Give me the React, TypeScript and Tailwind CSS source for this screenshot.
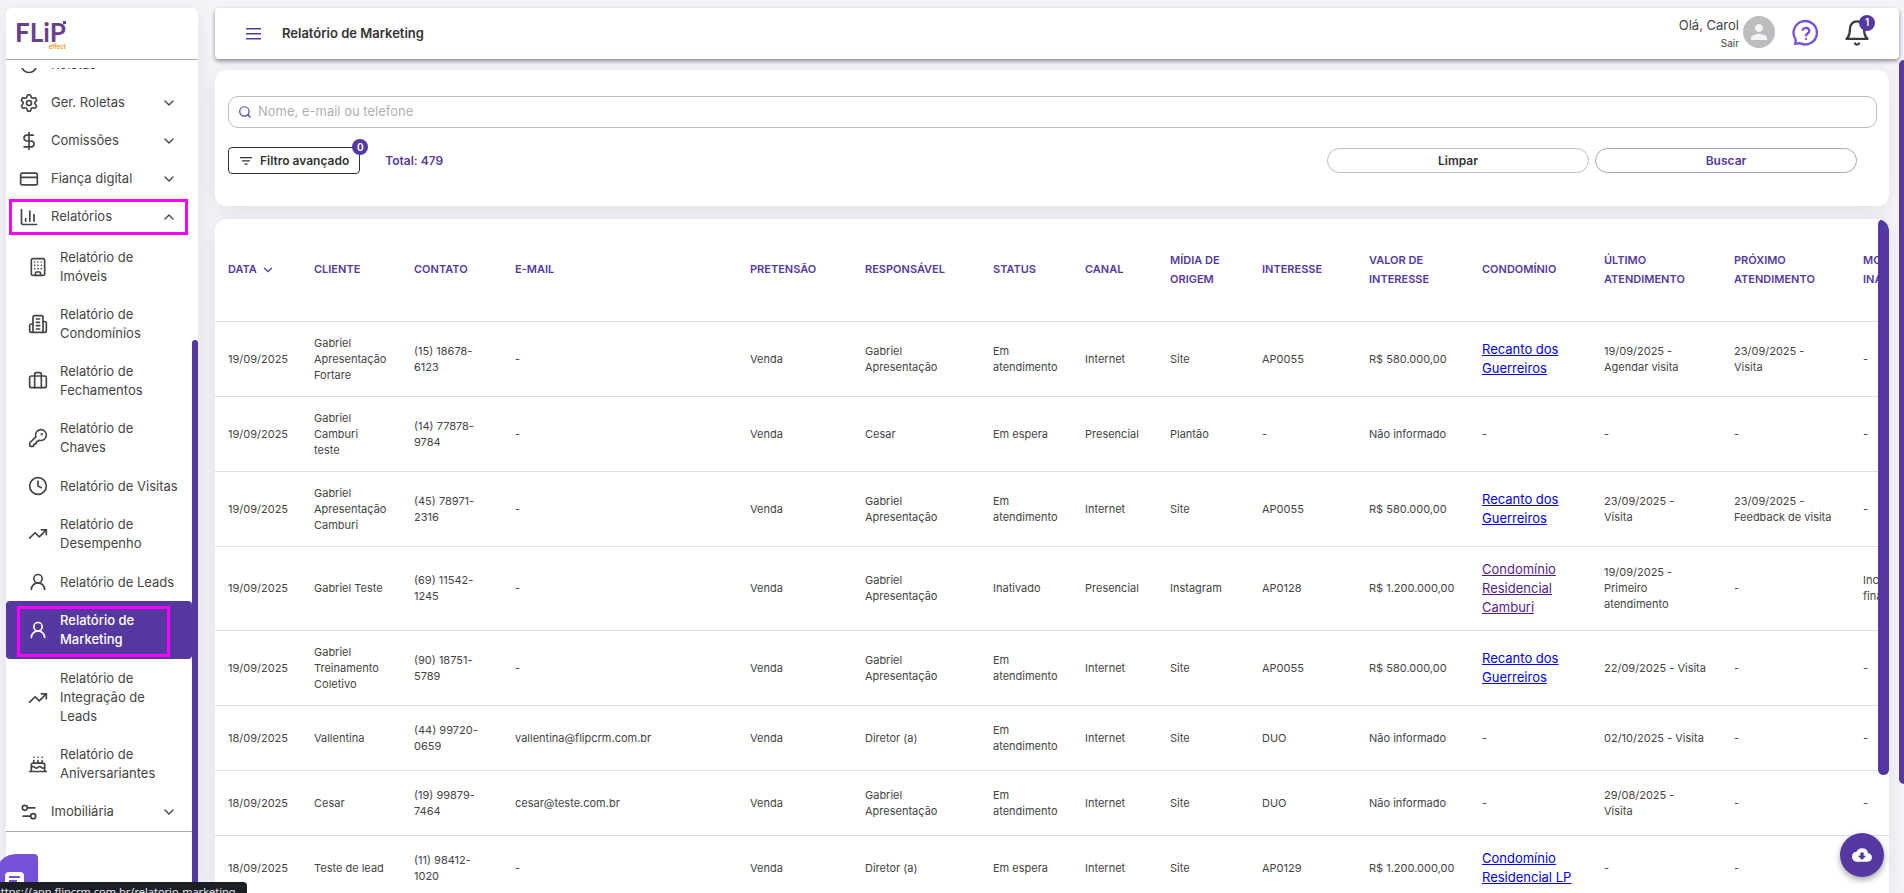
import { useState } from 'react';
import type { ComponentType, ReactNode } from 'react';
import {
  Briefcase,
  Building,
  Cake,
  ChartColumn,
  ChevronDown,
  ChevronUp,
  Clock,
  CreditCard,
  DollarSign,
  KeyRound,
  Search,
  Settings,
  Settings2,
  TrendingUp,
  UserRound,
} from 'lucide-react';
import { MdCloudDownload, MdPerson } from 'react-icons/md';

type IconProps = {
  className?: string;
};

type MenuItem = {
  label: string;
  icon: ComponentType<IconProps>;
  open?: boolean;
};

type Lead = {
  data: string;
  cliente: string;
  contato: string;
  email: string;
  responsavel: string;
  status: string;
  canal: string;
  midia: string;
  interesse: string;
  valor: string;
  condominio: string;
  visited?: boolean;
  ultimo: string;
  proximo: string;
  motivo: string;
};

const StrokeIcon = ({ className, children }: { className?: string; children: ReactNode }) => (
  <svg
    className={className}
    viewBox="0 0 24 24"
    fill="none"
    stroke="currentColor"
    strokeWidth="2"
    strokeLinecap="round"
    strokeLinejoin="round"
    aria-hidden="true"
  >
    {children}
  </svg>
);

const RouletteIcon = ({ className }: IconProps) => (
  <StrokeIcon className={className}>
    <circle cx="12" cy="12" r="9" />
  </StrokeIcon>
);

const CondoIcon = ({ className }: IconProps) => (
  <StrokeIcon className={className}>
    <path d="M6 22V4a2 2 0 0 1 2-2h8a2 2 0 0 1 2 2v18Z" />
    <path d="M6 12H4a2 2 0 0 0-2 2v6a2 2 0 0 0 2 2h2" />
    <path d="M18 9h2a2 2 0 0 1 2 2v9a2 2 0 0 1-2 2h-2" />
    <path d="M10 6h4M10 10h4M10 14h4M10 18h4" />
  </StrokeIcon>
);

const HelpIcon = ({ className }: IconProps) => (
  <StrokeIcon className={className}>
    <path d="M2.6 21.4c.9-1.7.6-3 .3-4.3A10 10 0 1 1 7.3 20.9c-1.5-.5-3 .2-4.7.5Z" />
    <path d="M9.2 9.3a3 3 0 0 1 5.7 1c0 1.9-2.9 2.3-2.9 3.9" />
    <path d="M12 17.2h.01" />
  </StrokeIcon>
);

const BellIcon = ({ className }: IconProps) => (
  <StrokeIcon className={className}>
    <path d="M6 8a6 6 0 0 1 12 0c0 7 3 9 3 9H3s3-2 3-9" />
    <path d="M10.3 21a1.94 1.94 0 0 0 3.4 0" />
  </StrokeIcon>
);

const menuTop: MenuItem[] = [
  { label: 'Roletas', icon: RouletteIcon },
  { label: 'Ger. Roletas', icon: Settings, open: false },
  { label: 'Comissões', icon: DollarSign, open: false },
  { label: 'Fiança digital', icon: CreditCard, open: false },
  { label: 'Relatórios', icon: ChartColumn, open: true },
];

const reports: MenuItem[] = [
  { label: 'Relatório de\nImóveis', icon: Building },
  { label: 'Relatório de\nCondomínios', icon: CondoIcon },
  { label: 'Relatório de\nFechamentos', icon: Briefcase },
  { label: 'Relatório de\nChaves', icon: KeyRound },
  { label: 'Relatório de Visitas', icon: Clock },
  { label: 'Relatório de\nDesempenho', icon: TrendingUp },
  { label: 'Relatório de Leads', icon: UserRound },
  { label: 'Relatório de\nMarketing', icon: UserRound },
  { label: 'Relatório de\nIntegração de\nLeads', icon: TrendingUp },
  { label: 'Relatório de\nAniversariantes', icon: Cake },
];

const columns = [
  { label: 'DATA', width: 'w-[86px]' },
  { label: 'CLIENTE', width: 'w-[100px]' },
  { label: 'CONTATO', width: 'w-[101px]' },
  { label: 'E-MAIL', width: 'w-[235px]' },
  { label: 'PRETENSÃO', width: 'w-[115px]' },
  { label: 'RESPONSÁVEL', width: 'w-[128px]' },
  { label: 'STATUS', width: 'w-[92px]' },
  { label: 'CANAL', width: 'w-[85px]' },
  { label: 'MÍDIA DE\nORIGEM', width: 'w-[92px]' },
  { label: 'INTERESSE', width: 'w-[107px]' },
  { label: 'VALOR DE\nINTERESSE', width: 'w-[113px]' },
  { label: 'CONDOMÍNIO', width: 'w-[122px]' },
  { label: 'ÚLTIMO\nATENDIMENTO', width: 'w-[130px]' },
  { label: 'PRÓXIMO\nATENDIMENTO', width: 'w-[129px]' },
  { label: 'MOTIVO DE\nINATIVAÇÃO', width: 'w-[130px]' },
];

const leads: Lead[] = [
  {
    data: '19/09/2025', cliente: 'Gabriel\nApresentação\nFortare', contato: '(15) 18678-\n6123', email: '-',
    responsavel: 'Gabriel\nApresentação', status: 'Em\natendimento', canal: 'Internet', midia: 'Site',
    interesse: 'AP0055', valor: 'R$ 580.000,00', condominio: 'Recanto dos\nGuerreiros',
    ultimo: '19/09/2025 -\nAgendar visita', proximo: '23/09/2025 -\nVisita', motivo: '-',
  },
  {
    data: '19/09/2025', cliente: 'Gabriel\nCamburi\nteste', contato: '(14) 77878-\n9784', email: '-',
    responsavel: 'Cesar', status: 'Em espera', canal: 'Presencial', midia: 'Plantão',
    interesse: '-', valor: 'Não informado', condominio: '-',
    ultimo: '-', proximo: '-', motivo: '-',
  },
  {
    data: '19/09/2025', cliente: 'Gabriel\nApresentação\nCamburi', contato: '(45) 78971-\n2316', email: '-',
    responsavel: 'Gabriel\nApresentação', status: 'Em\natendimento', canal: 'Internet', midia: 'Site',
    interesse: 'AP0055', valor: 'R$ 580.000,00', condominio: 'Recanto dos\nGuerreiros',
    ultimo: '23/09/2025 -\nVisita', proximo: '23/09/2025 -\nFeedback de visita', motivo: '-',
  },
  {
    data: '19/09/2025', cliente: 'Gabriel Teste', contato: '(69) 11542-\n1245', email: '-',
    responsavel: 'Gabriel\nApresentação', status: 'Inativado', canal: 'Presencial', midia: 'Instagram',
    interesse: 'AP0128', valor: 'R$ 1.200.000,00', condominio: 'Condomínio\nResidencial\nCamburi', visited: true,
    ultimo: '19/09/2025 -\nPrimeiro\natendimento', proximo: '-', motivo: 'Incapacidade\nfinanceira',
  },
  {
    data: '19/09/2025', cliente: 'Gabriel\nTreinamento\nColetivo', contato: '(90) 18751-\n5789', email: '-',
    responsavel: 'Gabriel\nApresentação', status: 'Em\natendimento', canal: 'Internet', midia: 'Site',
    interesse: 'AP0055', valor: 'R$ 580.000,00', condominio: 'Recanto dos\nGuerreiros',
    ultimo: '22/09/2025 - Visita', proximo: '-', motivo: '-',
  },
  {
    data: '18/09/2025', cliente: 'Vallentina', contato: '(44) 99720-\n0659', email: 'vallentina@flipcrm.com.br',
    responsavel: 'Diretor (a)', status: 'Em\natendimento', canal: 'Internet', midia: 'Site',
    interesse: 'DUO', valor: 'Não informado', condominio: '-',
    ultimo: '02/10/2025 - Visita', proximo: '-', motivo: '-',
  },
  {
    data: '18/09/2025', cliente: 'Cesar', contato: '(19) 99879-\n7464', email: 'cesar@teste.com.br',
    responsavel: 'Gabriel\nApresentação', status: 'Em\natendimento', canal: 'Internet', midia: 'Site',
    interesse: 'DUO', valor: 'Não informado', condominio: '-',
    ultimo: '29/08/2025 -\nVisita', proximo: '-', motivo: '-',
  },
  {
    data: '18/09/2025', cliente: 'Teste de lead', contato: '(11) 98412-\n1020', email: '-',
    responsavel: 'Diretor (a)', status: 'Em espera', canal: 'Internet', midia: 'Site',
    interesse: 'AP0129', valor: 'R$ 1.200.000,00', condominio: 'Condomínio\nResidencial LP',
    ultimo: '-', proximo: '-', motivo: '-',
  },
];

const Sidebar = () => {
  const [active, setActive] = useState<string>('Relatório de\nMarketing');

  const renderTop = ({ label, icon: Icon, open }: MenuItem) => (
    <button
      key={label}
      type="button"
      className="relative flex h-[38px] w-full shrink-0 items-center gap-3 pl-[13px] pr-[15px] text-left"
    >
      <Icon className="size-5" />
      <span className="flex-1">{label}</span>
      {open === false && <ChevronDown className="size-4" />}
      {open && <ChevronUp className="size-4" />}
      {open && (
        <span className="pointer-events-none absolute inset-y-px left-[3px] right-1 border-3 border-[#ff00ff]" />
      )}
    </button>
  );

  return (
    <aside className="relative mt-2 ml-1.5 flex w-48 shrink-0 flex-col overflow-hidden rounded-t-md bg-white shadow-[0_4px_20px_rgba(0,0,0,0.08)]">
      <div className="h-[52px] shrink-0 border-b border-[#a8a8a8] pt-3 pl-[9px]">
        <a href="#" aria-label="FLiP effect" className="relative block w-[51px] text-[#67418f]">
          <span className="block font-['Lato',sans-serif] text-[26px] leading-6 font-bold">FLiP</span>
          <span className="block text-right text-[6px] leading-[6px] font-bold text-[#f5a030]">effect</span>
          <span className="absolute top-px right-0 size-[3px] bg-[#67418f]" />
        </a>
      </div>
      <nav className="mt-2 flex-1 overflow-hidden pr-1.5">
        <div className="-mt-[22px] border-b border-[#a8a8a8]">
          {menuTop.map(renderTop)}
          <div className="pt-0.5 pb-px">
            {reports.map(({ label, icon: Icon }) => (
              <a
                key={label}
                href="#"
                onClick={() => setActive(label)}
                className={
                  label === active
                    ? 'relative flex items-center gap-3 rounded bg-[#5539a0] py-[10px] pl-[22px] font-medium text-white'
                    : 'relative flex min-h-[39px] items-center gap-3 pt-[10px] pb-[9px] pl-[22px]'
                }
              >
                <Icon className="size-5" />
                <span className="whitespace-pre leading-[19px]">{label}</span>
                {label === active && (
                  <span className="pointer-events-none absolute top-[5px] right-[22px] bottom-[2px] left-[11px] border-3 border-[#ff00ff]" />
                )}
              </a>
            ))}
          </div>
          {renderTop({ label: 'Imobiliária', icon: Settings2, open: false })}
        </div>
      </nav>
      <div className="absolute top-[332px] right-0 bottom-0 w-1.5 rounded-t-full bg-[#5539a0]" />
    </aside>
  );
};

const Header = () => (
  <header className="mr-[5px] mt-2 flex h-[51px] shrink-0 items-center rounded bg-white pr-7 pl-[31px] shadow-[0_2px_4px_rgba(0,0,0,0.45)]">
    <button type="button" aria-label="Menu" className="text-[#5539a0]">
      <svg width="15" height="12" viewBox="0 0 15 12" fill="currentColor">
        <path d="M0 0h15v1.5H0zM0 5h15v1.5H0zM0 10h15v1.5H0z" />
      </svg>
    </button>
    <h1 className="ml-[21px] flex-1 font-semibold text-[#333]">Relatório de Marketing</h1>
    <div className="text-right">
      <p className="leading-[19px]">Olá, Carol</p>
      <a href="#" className="block text-[10px] leading-4">Sair</a>
    </div>
    <span className="mr-[17px] mb-[3px] ml-1 flex size-8 items-center justify-center rounded-full bg-[#bdbdbd] text-[#f4f3fa]">
      <MdPerson className="size-6" />
    </span>
    <button type="button" aria-label="Ajuda" className="mr-[23px] mb-0.5 text-[#7650d6]">
      <HelpIcon className="size-7" />
    </button>
    <button type="button" aria-label="Notificações" className="relative mb-0.5 text-[#3c3c3c]">
      <BellIcon className="size-7" />
      <span className="absolute -top-1 -right-1 flex size-4 items-center justify-center rounded-full bg-[#5539a0] text-[10px] font-semibold text-white">
        1
      </span>
    </button>
  </header>
);

const FilterCard = () => {
  const [query, setQuery] = useState<string>('');

  return (
    <section className="shrink-0 rounded-xl bg-white pt-[26px] pr-3 pb-8 pl-[13px] shadow-[0_4px_20px_rgba(0,0,0,0.08)]">
      <label className="flex h-8 items-center gap-1.5 rounded-[10px] border border-[#bdbdbd] px-[9px]">
        <Search className="size-[14px] text-[#5539a0]" />
        <input
          type="text"
          aria-label="Nome, e-mail ou telefone"
          placeholder="Nome, e-mail ou telefone"
          value={query}
          onChange={(e) => setQuery(e.target.value)}
          className="flex-1 outline-none placeholder:text-[#b0b0b0]"
        />
      </label>
      <div className="mt-[19px] flex h-[27px] items-center">
        <button
          type="button"
          className="relative flex h-full items-center gap-2 rounded-sm border border-[#333] px-[11px] pr-2.5 text-[12px] font-semibold text-[#333]"
        >
          <svg width="12" height="8" viewBox="0 0 12 8" fill="currentColor">
            <path d="M0 0h12v1.2H0zM2 3.3h8v1.2H2zM4.5 6.6h3v1.2h-3z" />
          </svg>
          Filtro avançado
          <span className="absolute -top-[9px] -right-[9px] flex size-4 items-center justify-center rounded-full bg-[#5539a0] text-[10px] text-white">
            0
          </span>
        </button>
        <span className="ml-[25px] flex-1 text-[12px] font-semibold text-[#5539a0]">Total: 479</span>
        <div className="mr-5 flex gap-1.5 text-[12px] font-semibold">
          <button
            type="button"
            onClick={() => setQuery('')}
            className="h-[25px] w-[262px] rounded-full border border-[#bdbdbd] text-[#333]"
          >
            Limpar
          </button>
          <button type="button" className="h-[25px] w-[262px] rounded-full border border-[#aa9ccf] text-[#5539a0]">
            Buscar
          </button>
        </div>
      </div>
    </section>
  );
};

const LeadRow = ({ lead }: { lead: Lead }) => {
  const cell = 'h-[65px] py-[13px] pl-[13px]';
  return (
    <tr className="border-b border-[#e0e0e0]">
      <td className={cell}>{lead.data}</td>
      <td className={cell}>{lead.cliente}</td>
      <td className={cell}>{lead.contato}</td>
      <td className={cell}>{lead.email}</td>
      <td className={cell}>Venda</td>
      <td className={cell}>{lead.responsavel}</td>
      <td className={cell}>{lead.status}</td>
      <td className={cell}>{lead.canal}</td>
      <td className={cell}>{lead.midia}</td>
      <td className={cell}>{lead.interesse}</td>
      <td className={cell}>{lead.valor}</td>
      <td className={cell}>
        {lead.condominio === '-' ? (
          '-'
        ) : (
          <a
            href="#"
            className={
              lead.visited
                ? 'block text-[13px] leading-[19px] text-[#551a8b] underline'
                : 'block text-[13px] leading-[19px] text-[#0000ee] underline'
            }
          >
            {lead.condominio}
          </a>
        )}
      </td>
      <td className={cell}>{lead.ultimo}</td>
      <td className={cell}>{lead.proximo}</td>
      <td className={cell}>{lead.motivo}</td>
    </tr>
  );
};

const LeadsTable = () => (
  <section className="relative mt-[13px] min-h-0 flex-1 overflow-hidden rounded-t-xl bg-white shadow-[0_4px_20px_rgba(0,0,0,0.08)]">
    <table className="w-full min-w-[1765px] table-fixed border-collapse text-left text-[11px] leading-4 whitespace-pre">
      <thead>
        <tr className="h-[102px] border-b border-[#e0e0e0] leading-[19px] text-[#5539a0]">
          {columns.map(({ label, width }) => (
            <th key={label} className={`${width} pl-[13px] font-semibold`}>
              {label === 'DATA' ? (
                <span className="flex items-center gap-1">
                  DATA
                  <ChevronDown className="size-[14px]" />
                </span>
              ) : (
                label
              )}
            </th>
          ))}
        </tr>
      </thead>
      <tbody>
        {leads.map((lead) => (
          <LeadRow key={lead.contato} lead={lead} />
        ))}
      </tbody>
    </table>
    <div className="absolute top-0 right-0 h-[556px] w-[11px] rounded-full bg-[#5539a0]" />
  </section>
);

export default function App() {
  return (
    <div className="relative flex h-screen overflow-hidden bg-[#f4f3fa] font-['Inter',sans-serif] text-[13px] text-[#444]">
      <Sidebar />
      <div className="ml-[17px] flex min-w-0 flex-1 flex-col">
        <Header />
        <main className="mr-[15px] mt-[11px] flex min-h-0 flex-1 flex-col">
          <FilterCard />
          <LeadsTable />
        </main>
      </div>
      <div className="absolute top-[60px] right-0 h-[724px] w-[5px] rounded-l-full bg-[#5539a0]" />
      <button
        type="button"
        aria-label="Exportar"
        className="absolute right-5 bottom-4 flex size-11 items-center justify-center rounded-full bg-[#5539a0] text-white shadow-[0_3px_6px_rgba(0,0,0,0.35)]"
      >
        <MdCloudDownload className="size-5" />
      </button>
      <button
        type="button"
        aria-label="Abrir chat"
        className="absolute bottom-0 -left-1 h-[39px] w-[42px] rounded-tl-[20px] rounded-tr bg-[#7351d8] shadow-md"
      >
        <svg className="absolute top-[18px] left-[9px]" width="19" height="19" viewBox="0 0 19 19">
          <path d="M4 0h11a4 4 0 0 1 4 4v8a4 4 0 0 1-4 4H4l-4 3V4a4 4 0 0 1 4-4z" fill="#fff" />
          <path d="M4 5h11M4 9h8" stroke="#7351d8" strokeWidth="2" />
        </svg>
      </button>
      <div className="absolute bottom-0 left-0 h-[11px] w-[247px] overflow-hidden rounded-tr bg-[#1c2026]">
        <p className="-ml-1.5 pt-0.5 font-['Noto_Sans',sans-serif] text-[11px] leading-4 whitespace-nowrap text-[#e6e8ea]">
          https://app.flipcrm.com.br/relatorio-marketing
        </p>
      </div>
    </div>
  );
}
